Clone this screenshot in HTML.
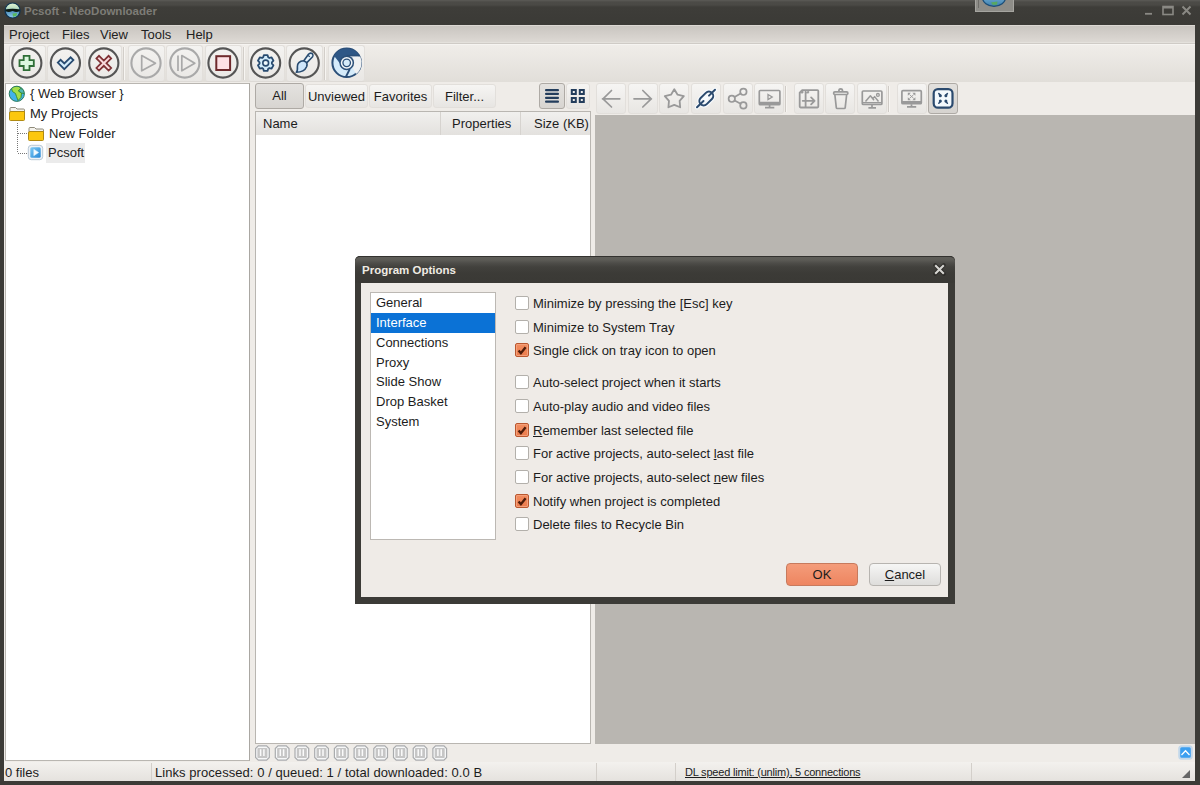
<!DOCTYPE html>
<html><head><meta charset="utf-8">
<style>
*{margin:0;padding:0;box-sizing:border-box}
html,body{width:1200px;height:785px;overflow:hidden;background:#3c3b37;font-family:"Liberation Sans",sans-serif;font-size:13px;color:#1c1c1c}
.a{position:absolute;white-space:nowrap;line-height:15px}
svg.a{overflow:visible}
#title{left:0;top:0;width:1200px;height:25px;background:linear-gradient(#5c5b57 0,#4c4b47 2px,#4a4945 5px,#3e3d39 7px,#3b3a36)}
#ttext{left:24px;top:4px;font-weight:bold;color:#7d7c77;font-size:11.5px}
#client{left:4px;top:25px;width:1191px;height:756px;background:#efece8}
#menubar{left:4px;top:25px;width:1191px;height:19px;background:linear-gradient(#c9c5c0,#dedad5);border-top:1px solid #dcd8d3;border-bottom:1px solid #cfcbc6;box-shadow:inset 0 -1px 0 #e4e1dc}
.menu{top:27px;color:#222}
#toolbar{left:4px;top:44px;width:1191px;height:38px;background:linear-gradient(#f0ede9,#e1ded9);border-top:1px solid #f6f4f1}
.tb{top:45px;width:37px;height:37px;border-radius:3px;background:linear-gradient(#f4f3f1,#e9e7e4);border:1px solid #e2dfdb;border-bottom-color:#dddad6}
.sep{top:47px;width:2px;height:33px;border-left:1px solid #d2cec9;border-right:1px solid #f7f5f2}
#tree{left:5px;top:83px;width:245px;height:678px;background:#fff;border:1px solid #b9b6b1;border-right-color:#aaa7a2}
.ti{color:#222}
#lv{left:255px;top:111px;width:336px;height:633px;background:#fff;border:1px solid #b9b6b1}
#lvh{left:256px;top:112px;width:334px;height:23px;background:linear-gradient(#f1f0ee,#e3e1de)}
.colsep{top:112px;width:1px;height:23px;background:#d6d3cf}
.fb{top:84px;height:24px;border-radius:3px;background:linear-gradient(#f6f5f3,#e7e5e2);border:1px solid #e2dfdb;text-align:center;line-height:22px;padding-top:1px}
.fb.on{top:83px;height:26px;background:linear-gradient(#e4e2df,#d8d5d1);border:1px solid #aeaaa5}
#gray{left:595px;top:115px;width:600px;height:629px;background:#b9b6b1}
#status{left:4px;top:762px;width:1191px;height:19px;background:linear-gradient(#f3f1ee,#e5e2de)}
.st{top:765px}
.ssep{top:763px;width:1px;height:18px;background:#d3cfca}
.rb{top:83px;width:30px;height:31px;border-radius:3px;background:linear-gradient(#f6f5f3,#e8e6e3);border:1px solid #e2dfdb}
.rb.on{background:linear-gradient(#e2e0dd,#d6d3cf);border:1px solid #aeaaa5}
.rsep{top:86px;width:2px;height:26px;border-left:1px solid #cfcbc6;border-right:1px solid #f7f5f2}
/* dialog */
#dlg{left:355px;top:256px;width:600px;height:348px;background:#3c3b37;border-radius:5px 5px 0 0}
#dtitle{left:355px;top:256px;width:600px;height:27px;border-radius:5px 5px 0 0;border-top:1px solid #33322f;background:linear-gradient(#5f5e59 0,#5c5b56 3px,#4e4d49 6px,#42413d 10px,#3c3b37 16px,#3a3935)}
#dttext{left:362px;top:263px;font-weight:bold;color:#efebe3;font-size:11.5px}
#dbody{left:361px;top:283px;width:587px;height:314px;background:#efebe7}
#dlist{left:370px;top:292px;width:126px;height:248px;background:#fff;border:1px solid #bcb8b3}
.li{left:376px}
.cb{left:515px;width:14px;height:14px;border:1px solid #b3b0ab;border-radius:2px;background:#fff}
.cb.on{background:linear-gradient(#f28d60,#eb7b4c);border-color:#b9572f;box-shadow:inset 0 0 0 1px #f4a07a}
.ck{left:533px}
.btn{top:563px;width:72px;height:23px;border-radius:4px;text-align:center;line-height:21px}
</style></head><body>
<div class="a" id="title"></div>
<div class="a" id="ttext">Pcsoft - NeoDownloader</div>
<div class="a" id="client"></div>
<div class="a" id="menubar"></div>
<div class="a menu" style="left:9px">Project</div>
<div class="a menu" style="left:62px">Files</div>
<div class="a menu" style="left:100px">View</div>
<div class="a menu" style="left:141px">Tools</div>
<div class="a menu" style="left:186px">Help</div>
<div class="a" id="toolbar"></div>
<div class="a tb" style="left:9px"></div>
<div class="a tb" style="left:47px"></div>
<div class="a tb" style="left:85px"></div>
<div class="a sep" style="left:123px"></div>
<div class="a tb" style="left:128px"></div>
<div class="a tb" style="left:166px"></div>
<div class="a tb" style="left:205px"></div>
<div class="a sep" style="left:243px"></div>
<div class="a tb" style="left:248px"></div>
<div class="a tb" style="left:286px"></div>
<div class="a sep" style="left:324px"></div>
<div class="a tb" style="left:328px"></div>

<div class="a" id="tree"></div>
<div class="a ti" style="left:30px;top:86px">{ Web Browser }</div>
<div class="a ti" style="left:30px;top:106px">My Projects</div>
<div class="a ti" style="left:49px;top:126px">New Folder</div>
<div class="a" style="left:46px;top:143px;width:39px;height:20px;background:#ebebeb"></div>
<div class="a ti" style="left:48px;top:145px">Pcsoft</div>

<div class="a fb on" style="left:255px;width:49px">All</div>
<div class="a fb" style="left:305px;width:63px">Unviewed</div>
<div class="a fb" style="left:369px;width:63px">Favorites</div>
<div class="a fb" style="left:433px;width:63px">Filter...</div>
<div class="a fb on" style="left:539px;width:26px;top:83px;height:26px"></div>
<div class="a fb" style="left:566px;width:24px;top:83px;height:26px"></div>
<div class="a" id="lv"></div>
<div class="a" id="lvh"></div>
<div class="a colsep" style="left:440px"></div>
<div class="a colsep" style="left:520px"></div>
<div class="a" style="left:263px;top:116px">Name</div>
<div class="a" style="left:452px;top:116px">Properties</div>
<div class="a" style="left:534px;top:116px">Size (KB)</div>

<div class="a rb" style="left:596px"></div>
<div class="a rb" style="left:628px"></div>
<div class="a rb" style="left:659px"></div>
<div class="a rb" style="left:691px"></div>
<div class="a rb" style="left:723px"></div>
<div class="a rb" style="left:754px"></div>
<div class="a rsep" style="left:785px"></div>
<div class="a rb" style="left:794px"></div>
<div class="a rb" style="left:825px"></div>
<div class="a rb" style="left:857px"></div>
<div class="a rsep" style="left:888px"></div>
<div class="a rb" style="left:897px"></div>
<div class="a rb on" style="left:928px"></div>
<div class="a" id="gray"></div>

<div class="a" id="status"></div>
<div class="a st" style="left:5px">0 files</div>
<div class="a ssep" style="left:151px"></div>
<div class="a st" style="left:155px;letter-spacing:0.06px">Links processed: 0 / queued: 1 / total downloaded: 0.0 B</div>
<div class="a ssep" style="left:596px"></div>
<div class="a ssep" style="left:675px"></div>
<div class="a st" style="left:685px;top:765px;text-decoration:underline;font-size:11px;letter-spacing:-0.2px">DL speed limit: (unlim), 5 connections</div>
<div class="a ssep" style="left:971px"></div>

<svg class="a" style="left:0;top:0" width="1200" height="785" viewBox="0 0 1200 785">
<!-- window buttons -->
<g fill="none" stroke="#8a8984" stroke-width="1.6">
<path d="M1145 13.8H1152" stroke-width="1.8"/>
<rect x="1163" y="6.5" width="10" height="8"/><path d="M1163 7.5H1173" stroke-width="2"/>
<path d="M1182.5 6.5L1190.5 14.5M1190.5 6.5L1182.5 14.5" stroke-width="2"/>
</g>
<!-- app globe -->
<defs>
<linearGradient id="glb" x1="0" y1="0" x2="0" y2="1"><stop offset="0" stop-color="#e4f6d6"/><stop offset="0.35" stop-color="#b8dcc0"/><stop offset="0.5" stop-color="#4a88b8"/><stop offset="1" stop-color="#8fd0f0"/></linearGradient>
</defs>
<circle cx="12.6" cy="10.5" r="7.5" fill="url(#glb)" stroke="#0e3352" stroke-width="1.2"/>
<path d="M5.3 9.5Q12.6 8 19.9 9.5L19.6 11.2Q16 12.6 13.5 11.2Q12.6 10.6 11.7 11.2Q9 12.6 5.6 11.2Z" fill="#0c1a12"/>
<path d="M12.5 13.5L17 13L16.5 16L13 16.8Z" fill="#58b860"/>
<!-- dock thing at top -->
<rect x="975.5" y="-2" width="38" height="13.5" fill="#8e8d88" stroke="#a6a5a0" stroke-width="1"/>
<path d="M978.5 0V8" stroke="#6e6d69" stroke-width="1"/>
<defs><linearGradient id="dg" x1="0" y1="0" x2="0" y2="1"><stop offset="0" stop-color="#9fd0ea"/><stop offset="1" stop-color="#3b7fb0"/></linearGradient></defs>
<ellipse cx="994" cy="-2.5" rx="11.5" ry="8.8" fill="url(#dg)" stroke="#1d4e78" stroke-width="1.3"/>
<path d="M991 2.5L997.5 1.5L997 4.8L992.5 4.8Z" fill="#58a860"/>

<!-- main toolbar circles -->
<g fill="none" stroke-width="2.1">
<circle cx="26.8" cy="63" r="14.6" stroke="#555"/>
<circle cx="65.4" cy="63" r="14.6" stroke="#555"/>
<circle cx="103.8" cy="63" r="14.6" stroke="#555"/>
<circle cx="146" cy="63" r="14.6" stroke="#a9a9a9"/>
<circle cx="184.8" cy="63" r="14.6" stroke="#a9a9a9"/>
<circle cx="223" cy="63" r="14.6" stroke="#555"/>
<circle cx="265.6" cy="63" r="14.6" stroke="#555"/>
<circle cx="304.2" cy="63" r="14.6" stroke="#555"/>
</g>
<!-- plus -->
<path d="M23.7 55.9H29.5V60.2H33.8V66H29.5V70.2H23.7V66H19.5V60.2H23.7Z" fill="#dbf7df" stroke="#2f6e37" stroke-width="1.8" stroke-linejoin="miter"/>
<!-- check -->
<path d="M57.8 62.6L60.6 59.8L64.3 63.5L70.6 57.3L73.4 60.1L64.3 69.2Z" fill="#d3ecfb" stroke="#284b70" stroke-width="1.8"/>
<!-- x -->
<path transform="translate(0 -0.8)" d="M96.4 59.2L99 56.6L103.8 61.4L108.6 56.6L111.2 59.2L106.4 64L111.2 68.8L108.6 71.4L103.8 66.6L99 71.4L96.4 68.8L101.2 64Z" fill="#fadadd" stroke="#7e3034" stroke-width="1.7"/>
<!-- play disabled -->
<path d="M141.7 55.6L155.5 63.2L141.7 70.8Z" fill="none" stroke="#a9a9a9" stroke-width="1.7" stroke-linejoin="round"/>
<path d="M178 55.4V71" stroke="#a9a9a9" stroke-width="1.7"/>
<path d="M181.8 55.6L194.8 63.2L181.8 70.8Z" fill="none" stroke="#a9a9a9" stroke-width="1.7" stroke-linejoin="round"/>
<!-- stop -->
<rect x="216.3" y="56.2" width="13.8" height="13.8" fill="#fde1e5" stroke="#6e2a2c" stroke-width="2"/>
<!-- gear -->
<path d="M263.18 57.34L263.88 55.11L267.52 55.11L268.22 57.34L269.34 57.98L271.62 57.48L273.45 60.63L271.87 62.35L271.87 63.65L273.45 65.37L271.62 68.52L269.34 68.02L268.22 68.66L267.52 70.89L263.88 70.89L263.18 68.66L262.06 68.02L259.78 68.52L257.95 65.37L259.53 63.65L259.53 62.35L257.95 60.63L259.78 57.48L262.06 57.98Z" fill="#d3ecfb" stroke="#284b70" stroke-width="1.8" stroke-linejoin="round"/>
<circle cx="265.7" cy="63" r="2.9" fill="#eef8fd" stroke="#284b70" stroke-width="1.6"/>
<!-- brush -->
<path d="M303.8 60.8L308.5 54.3Q310.3 52.2 312.3 53.7Q313.8 55.2 312.6 56.8L306.9 62.6" fill="#e6f3fb" stroke="#284b70" stroke-width="1.6" stroke-linejoin="round"/>
<path d="M308.2 55.6L309.8 56.8" stroke="#284b70" stroke-width="1.2"/>
<path d="M303.5 60.8C299.5 61 297.2 63.5 297.4 66.5C297.6 69 297.5 71 296.3 72.3C300.5 72.3 305 70.5 306.6 66.8C307.3 65 307 63 306 62Z" fill="#cfe6fa" stroke="#284b70" stroke-width="1.6" stroke-linejoin="round"/>
<!-- chrome -->
<circle cx="346.7" cy="62.8" r="14.3" fill="#d5ebfa" stroke="#2b4f78" stroke-width="2"/>
<path d="M346.7 56.3H360.2A14.3 14.3 0 0 1 356 74Z" fill="#eff1f2"/>
<path d="M334.2 56A14.3 14.3 0 0 1 359.3 56H346.7L339.8 63.2Z" fill="#2e5786"/>
<path d="M346.7 55.6H360" stroke="#2b4f78" stroke-width="1.6"/>
<path d="M349.8 69L345.8 77" stroke="#2b4f78" stroke-width="1.8"/>
<circle cx="346.7" cy="62.8" r="7.4" fill="#2b4f78"/>
<circle cx="346.7" cy="62.8" r="5.9" fill="#f4f7f9"/>
<circle cx="346.7" cy="62.8" r="4.4" fill="#2b4f78"/>
<circle cx="346.7" cy="62.8" r="3.1" fill="#d5ebfa"/>

<!-- tree icons -->
<defs><clipPath id="gc"><circle cx="16.8" cy="93.8" r="7.6"/></clipPath></defs>
<circle cx="16.8" cy="93.8" r="7.6" fill="#42b2ea"/>
<g clip-path="url(#gc)" stroke="#3a8a2e" stroke-width="0.9" stroke-linejoin="round">
<path d="M11.5 88.5L14 86.3L19 86.3L20.5 88.5L18.5 91L21.5 93L21 97.5L18 100.5L16.5 96.5L15.5 93.5L12.5 91.5Z" fill="#a3de4a"/>
<path d="M20.5 88.5L23.5 89.5L24.8 93.8L21.5 93L18.5 91Z" fill="#4fb8b4"/>
</g>
<circle cx="16.8" cy="93.8" r="7.6" fill="none" stroke="#2e7b5a" stroke-width="1"/>
<!-- folders -->
<g stroke-linejoin="round">
<path d="M10 119V108.5Q10 107.5 11 107.5H15.5L17 109H23.5Q24.5 109 24.5 110V119Z" fill="#f4f2ec" stroke="#8e8a7a" stroke-width="1"/>
<path d="M9.5 119.5V113Q9.5 111.5 11 111.5H24.5V119.5Q24.5 120.5 23.5 120.5H10.5Q9.5 120.5 9.5 119.5Z" fill="#fcc70f" stroke="#b08a12" stroke-width="1"/>
<path d="M29 139V128.5Q29 127.5 30 127.5H34.5L36 129H42.5Q43.5 129 43.5 130V139Z" fill="#f4f2ec" stroke="#8e8a7a" stroke-width="1"/>
<path d="M28.5 139.5V133Q28.5 131.5 30 131.5H43.5V139.5Q43.5 140.5 42.5 140.5H29.5Q28.5 140.5 28.5 139.5Z" fill="#fcc70f" stroke="#b08a12" stroke-width="1"/>
</g>
<!-- tree dotted lines -->
<path d="M17.5 123V153M18 133.5H28M18 153.5H28" stroke="#777" stroke-width="1" stroke-dasharray="1 1"/>
<!-- pcsoft icon -->
<defs><linearGradient id="pcg" x1="0" y1="0" x2="1" y2="1"><stop offset="0" stop-color="#7ccaf6"/><stop offset="1" stop-color="#2687d6"/></linearGradient></defs>
<rect x="28.3" y="145.3" width="14.4" height="14.4" rx="3" fill="#eef3f8" stroke="#b9c9d6" stroke-width="1"/>
<rect x="30.3" y="147.3" width="10.4" height="10.4" rx="1.5" fill="url(#pcg)"/>
<path d="M33.8 149.3L38.6 152.5L33.8 155.7Z" fill="#f4fbff" stroke="#d8eefc" stroke-width="0.6"/>
<!-- list/grid view icons -->
<g fill="#233d5c">
<rect x="545" y="89" width="14" height="2.2" rx="1"/>
<rect x="545" y="92.8" width="14" height="2.2" rx="1"/>
<rect x="545" y="96.7" width="14" height="2.2" rx="1"/>
<rect x="545" y="100.5" width="14" height="2.2" rx="1"/>
</g>
<g fill="none" stroke="#233d5c" stroke-width="2">
<rect x="571.8" y="90" width="4" height="4"/>
<rect x="579.8" y="90" width="4" height="4"/>
<rect x="571.8" y="98" width="4" height="4"/>
<rect x="579.8" y="98" width="4" height="4"/>
</g>

<!-- right toolbar icons -->
<g fill="none" stroke="#999" stroke-width="1.7" stroke-linecap="round" stroke-linejoin="round">
<path d="M602.5 98.8H619.8M611.5 90.5L603 98.8L611.5 107"/>
<path d="M634 98.8H651.4M642.8 90.5L651.2 98.8L642.8 107"/>
<path d="M674.30 89.20L677.59 94.67L683.81 96.11L679.63 100.93L680.18 107.29L674.30 104.80L668.42 107.29L668.97 100.93L664.79 96.11L671.01 94.67Z" stroke-width="1.8"/>
<circle cx="743.4" cy="91.8" r="3.2"/><circle cx="731.8" cy="98.8" r="3.2"/><circle cx="743.4" cy="105.4" r="3.2"/>
<path d="M734.6 97.1L740.6 93.5M734.6 100.5L740.6 103.8"/>
</g>
<!-- link -->
<g fill="none" stroke-linecap="round">
<g stroke="#f7fbfe" stroke-width="4.2"><path d="M697 107.3L715 89.7"/><rect x="698.3" y="94.2" width="16" height="8.6" rx="4.3" transform="rotate(-45 706.3 98.5)"/></g>
<g stroke="#2b4a6e" stroke-width="2"><path d="M697 107.3L703.5 101M709 95.6L715 89.7"/><rect x="698.3" y="94.2" width="16" height="8.6" rx="4.3" transform="rotate(-45 706.3 98.5)"/></g>
</g>
<!-- monitor play -->
<g fill="none" stroke="#999" stroke-width="1.7">
<rect x="759.3" y="90.5" width="20.6" height="14.2" rx="1"/>
<path d="M759.3 103H780" stroke-width="2.5"/>
<path d="M769.6 105V107.3M765 107.6H774.3" stroke-width="1.7"/>
</g>
<path d="M768 94.5L772.2 97L768 99.5Z" fill="none" stroke="#999" stroke-width="1.3"/>
<!-- copy -->
<g fill="none" stroke="#999" stroke-width="1.8" stroke-linejoin="round">
<path d="M802.2 90.1H817.4Q818.3 90.1 818.3 91V106.6Q818.3 107.5 817.4 107.5H800.6Q799.7 107.5 799.7 106.6V92.6Z"/>
<path d="M805.6 91V107.5"/>
<path d="M802.7 100.8H814.6M811.1 97.4L814.6 100.8L811.1 104.3" stroke-linecap="round"/>
</g>
<path d="M800.5 93L803 90.5V93Z M806.2 93L808.7 90.5V93Z" fill="#999" stroke="#999" stroke-width="0.8"/>
<!-- trash -->
<g fill="none" stroke="#999" stroke-width="1.7" stroke-linejoin="round">
<rect x="833.6" y="91.9" width="14.3" height="2.6" rx="1.3"/>
<path d="M838.8 91.5Q838.8 88.9 840.7 88.9Q842.6 88.9 842.6 91.5"/>
<path d="M834.9 95L836.3 107.6Q836.4 108.5 837.3 108.5H844.2Q845.1 108.5 845.2 107.6L846.6 95"/>
</g>
<!-- image monitor -->
<g fill="none" stroke="#999" stroke-width="1.7">
<rect x="862.3" y="91" width="19.6" height="13.5" rx="1"/>
<path d="M862.3 102.7H881.9" stroke-width="1.4"/>
<path d="M872 104.5V107M868.4 107.8H876" />
<path d="M865.5 101.5L870.4 95.8L874 100.3M872.8 98.8L874.6 96.6L878.5 101.5" stroke-width="1.5" stroke-linejoin="round"/>
<circle cx="877.9" cy="94.9" r="1.4" stroke-width="1.3"/>
</g>
<!-- monitor fs -->
<g fill="none" stroke="#999" stroke-width="1.7">
<rect x="901.9" y="90.7" width="19.4" height="13" rx="1"/>
<path d="M901.9 102.3H921.3" stroke-width="2.6"/>
<path d="M911.5 104.3V106.7M907 106.9H916.2"/>
<path d="M909.5 94.6L913.7 98.4M913.7 94.6L909.5 98.4" stroke-width="0.9"/>
</g>
<g fill="#999"><path d="M907.8 92.8H910.8L907.8 95.8Z"/><path d="M915.4 92.8H912.4L915.4 95.8Z"/><path d="M907.8 100.2H910.8L907.8 97.2Z"/><path d="M915.4 100.2H912.4L915.4 97.2Z"/></g>
<!-- fullscreen exit -->
<rect x="933.7" y="89.1" width="18.8" height="18.6" rx="4.2" fill="#f4f9fd" stroke="#2b4a6e" stroke-width="2.2"/>
<g stroke="#2b4a6e" stroke-width="1.5" fill="none" stroke-linecap="round">
<path d="M938.8 93.6L940.6 95.4M947.4 93.6L945.6 95.4M938.8 103.2L940.6 101.4M947.4 103.2L945.6 101.4"/>
</g>
<g fill="#2b4a6e">
<circle cx="940.3" cy="95.7" r="1.5"/><circle cx="945.9" cy="95.7" r="1.5"/><circle cx="940.3" cy="101.1" r="1.5"/><circle cx="945.9" cy="101.1" r="1.5"/>
</g>

<!-- bottom small buttons -->
<g id="smb">
<path d="M258.3 745.8H266.6L269.3 748.5V757.5L266.6 760.2H258.3L255.6 757.5V748.5Z" fill="#f7f8f9" stroke="#a9abad" stroke-width="1.2"/>
<rect x="257.4" y="748" width="10" height="10" rx="0.8" fill="#c6c6c6"/>
<path d="M260.6 749.3V756M263.9 749.3V756" stroke="#fbfbfb" stroke-width="1.5"/>
</g>
<use href="#smb" x="19.7"/><use href="#smb" x="39.4"/><use href="#smb" x="59.1"/><use href="#smb" x="78.8"/>
<use href="#smb" x="98.5"/><use href="#smb" x="118.2"/><use href="#smb" x="137.9"/><use href="#smb" x="157.6"/><use href="#smb" x="177.3"/>
<!-- scroll up button -->
<rect x="1179.2" y="746.2" width="12.6" height="12.6" rx="2.5" fill="#3c9ff0" stroke="#c3d8ea" stroke-width="2"/>
<path d="M1181.5 755L1185.5 750.8L1189.5 755" fill="none" stroke="#fff" stroke-width="1.3"/>
<!-- grip -->
<path d="M1182 778H1190V770Z" fill="#666"/>
</svg>

<div class="a" id="dlg"></div>
<div class="a" id="dtitle"></div>
<div class="a" id="dttext">Program Options</div>
<div class="a" id="dbody"></div>
<div class="a" id="dlist"></div>
<div class="a" style="left:371px;top:313px;width:124px;height:20px;background:#0b72d6"></div>
<div class="a li" style="top:295px">General</div>
<div class="a li" style="top:315px;color:#fff">Interface</div>
<div class="a li" style="top:335px">Connections</div>
<div class="a li" style="top:355px">Proxy</div>
<div class="a li" style="top:374px">Slide Show</div>
<div class="a li" style="top:394px">Drop Basket</div>
<div class="a li" style="top:414px">System</div>

<div class="a cb" style="top:296px"></div><div class="a ck" style="top:296px">Minimize by pressing the [Esc] key</div>
<div class="a cb" style="top:320px"></div><div class="a ck" style="top:320px">Minimize to System Tray</div>
<div class="a cb on" style="top:343px"></div><div class="a ck" style="top:343px">Single click on tray icon to open</div>
<div class="a cb" style="top:375px"></div><div class="a ck" style="top:375px">Auto-select project when it starts</div>
<div class="a cb" style="top:399px"></div><div class="a ck" style="top:399px">Auto-play audio and video files</div>
<div class="a cb on" style="top:423px"></div><div class="a ck" style="top:423px"><u>R</u>emember last selected file</div>
<div class="a cb" style="top:446px"></div><div class="a ck" style="top:446px">For active projects, auto-select <u>l</u>ast file</div>
<div class="a cb" style="top:470px"></div><div class="a ck" style="top:470px">For active projects, auto-select <u>n</u>ew files</div>
<div class="a cb on" style="top:494px"></div><div class="a ck" style="top:494px">Notify when project is completed</div>
<div class="a cb" style="top:517px"></div><div class="a ck" style="top:517px">Delete files to Recycle Bin</div>

<svg class="a" style="left:0;top:0" width="1200" height="785" viewBox="0 0 1200 785">
<g id="tick"><path d="M518.6 350.4L520.9 353.2L525.6 347.2" fill="none" stroke="#4e1c0a" stroke-width="2.4"/></g>
<use href="#tick" y="80"/><use href="#tick" y="151"/>
<path d="M935.2 265.2L943.8 273.8M943.8 265.2L935.2 273.8" stroke="#262522" stroke-width="4" stroke-opacity="0.7" stroke-linecap="round"/><path d="M935.2 265.2L943.8 273.8M943.8 265.2L935.2 273.8" stroke="#d6d5d1" stroke-width="2.1"/>
</svg>

<div class="a btn" style="left:786px;background:linear-gradient(#f49c7a,#ee8560);border:1px solid #c77a5d">OK</div>
<div class="a btn" style="left:869px;background:linear-gradient(#f6f6f5,#dedddb);border:1px solid #b7b4b0"><u>C</u>ancel</div>
</body></html>
